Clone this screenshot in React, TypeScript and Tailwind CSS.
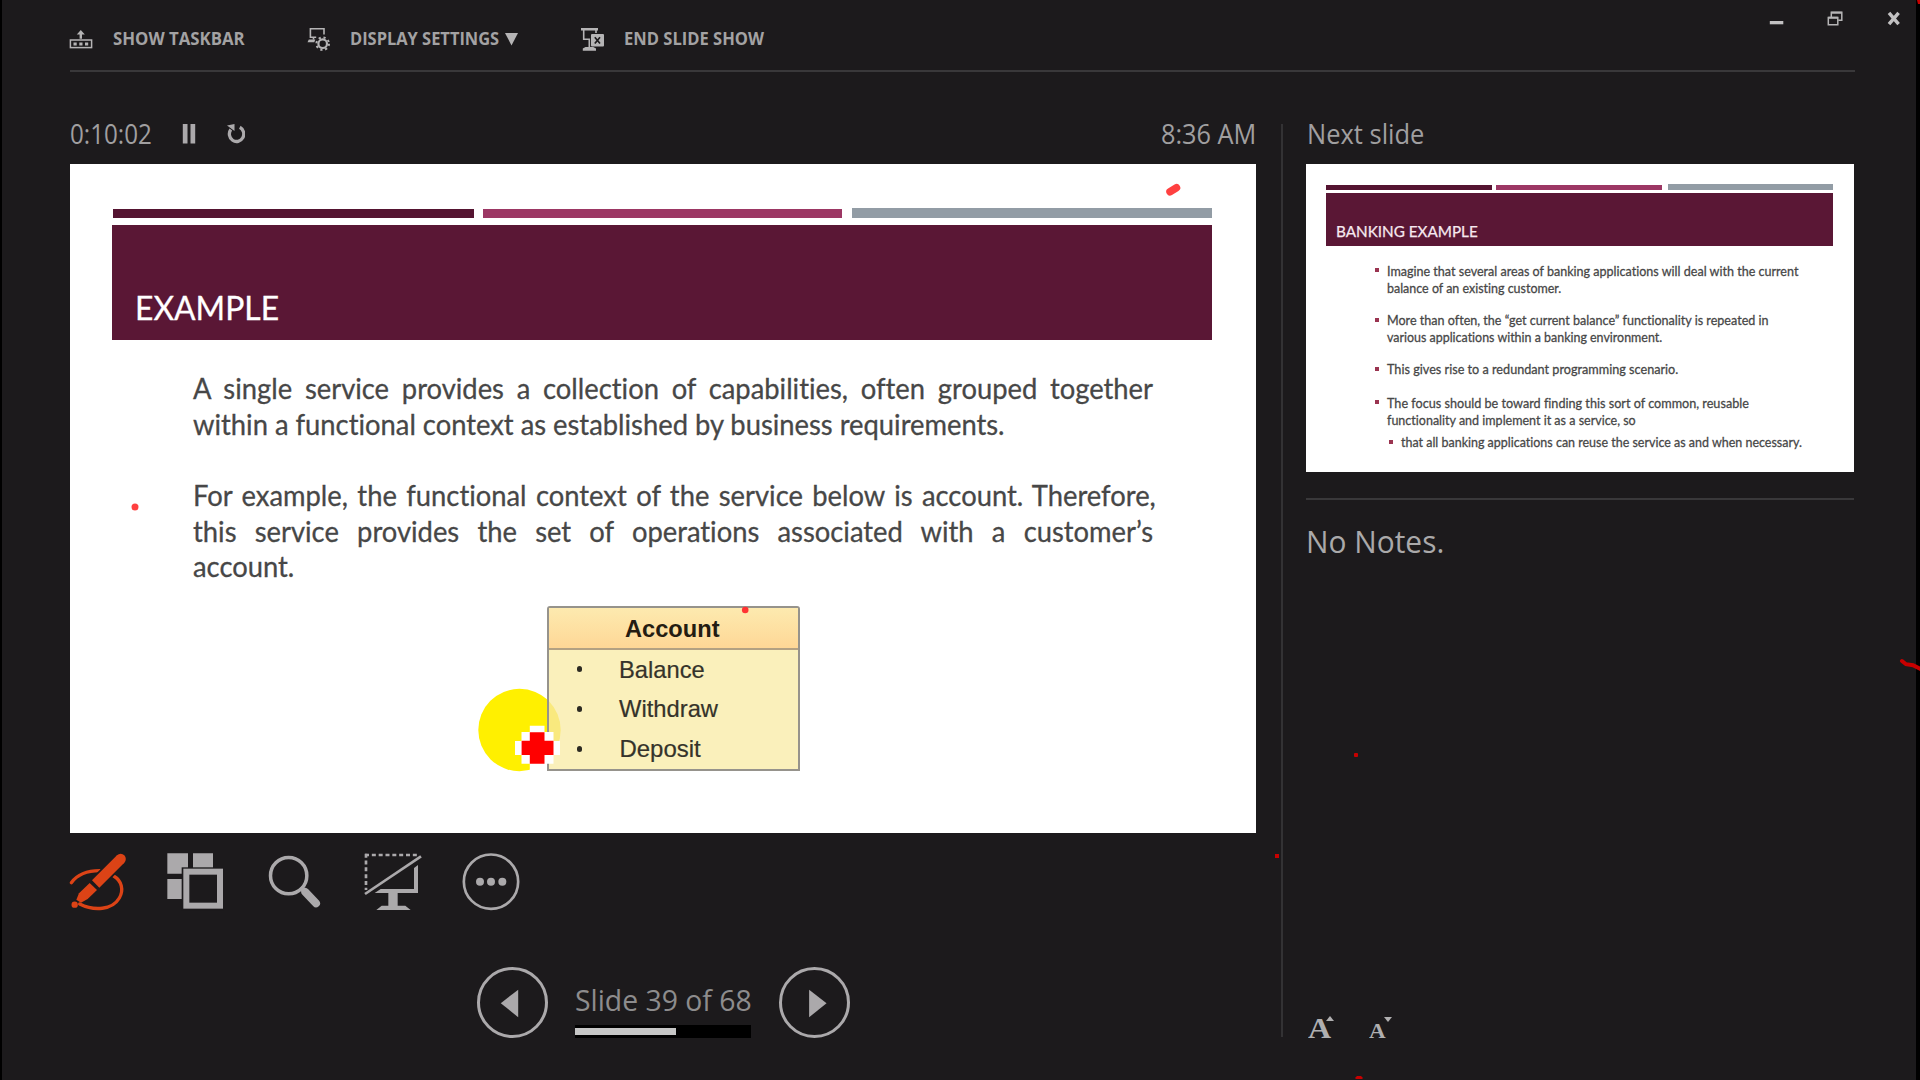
import { useLayoutEffect, useRef, type ReactNode } from "react";

const UI = "font-['Open_Sans','Noto_Sans',sans-serif]";
const SLIDE = "font-['Lato','Open_Sans',sans-serif] [font-variant-ligatures:none]";

/** One line of text, condensed or widened to fill the width given by its class. */
function Fit({ className, children }: { className: string; children: ReactNode }) {
  const outer = useRef<HTMLDivElement>(null);
  const inner = useRef<HTMLSpanElement>(null);
  useLayoutEffect(() => {
    const fit = () => {
      if (!outer.current || !inner.current) return;
      const scale = outer.current.getBoundingClientRect().width / inner.current.offsetWidth;
      inner.current.style.transform = `scaleX(${scale})`;
    };
    fit();
    document.fonts?.ready.then(fit);
  }, []);
  return (
    <div ref={outer} className={`shrink-0 ${className}`}>
      <span ref={inner} className="inline-block origin-left whitespace-nowrap">
        {children}
      </span>
    </div>
  );
}

function TaskbarIcon() {
  return (
    <svg viewBox="69 26 24 24" className="h-6 w-6 shrink-0" fill="#b5b4b5">
      <path d="M80.8 30l4 4.6h-2.8v4.2h-2.4v-4.2h-2.8z" />
      <rect x="70.4" y="40" width="21.2" height="7.6" fill="none" stroke="#b5b4b5" strokeWidth="1.5" />
      <path d="M73.5 42.4h3.2v3h-3.2zM79.3 42.4h3.2v3h-3.2zM85 42.4h3.2v3H85z" />
    </svg>
  );
}

function DisplayIcon() {
  return (
    <svg viewBox="307 26 24 24" className="h-6 w-6 shrink-0 overflow-visible" fill="none" stroke="#b5b4b5">
      <path d="M324 34.5v-5.700h-13.600v8.400h5.800M313.500 37v2.500" strokeWidth="1.600" />
      <path d="M308.800 39.500h6.500l-1 2.700h-6.800z" fill="#b5b4b5" stroke="none" />
      <circle cx="322.700" cy="43.700" r="4.300" strokeWidth="2.200" />
      <circle cx="322.700" cy="43.700" r="6.300" strokeWidth="2" strokeDasharray="2.200 2.750" />
    </svg>
  );
}

function EndShowIcon() {
  return (
    <svg viewBox="581 26 24 24" className="h-6 w-6 shrink-0 overflow-visible" fill="#b5b4b5">
      <path d="M581 28h17v2.600h-17zM582.800 48.500l2.700-1.500h7.800l2.700 1.500v2.200h-13.200z" />
      <path d="M583.700 30v9.200h5.600v8M596 30v3" fill="none" stroke="#b5b4b5" strokeWidth="1.600" />
      <rect x="591" y="34" width="13" height="12.600" rx="1" />
      <path d="M594.800 37.200l5.200 6.300M600 37.200l-5.200 6.300" stroke="#1c1a1c" strokeWidth="1.700" />
    </svg>
  );
}

function Header() {
  return (
    <header className={`ml-[67px] flex h-[70px] w-[1832px] items-center pt-[6px] text-[18px] leading-6 font-bold text-[#a3a2a3] ${UI}`}>
      <TaskbarIcon />
      <Fit className="ml-[19.500px] w-[131.500px]">SHOW TASKBAR</Fit>
      <span className="w-[63px]" />
      <DisplayIcon />
      <Fit className="ml-[19.200px] w-[148.800px]">DISPLAY SETTINGS</Fit>
      <svg viewBox="505 26 13 24" className="ml-[6px] h-6 w-[13px]" fill="#b5b4b5">
        <path d="M505 33h13l-6.500 12.500z" />
      </svg>
      <span className="w-[63px]" />
      <EndShowIcon />
      <Fit className="ml-[18.800px] w-[139.800px]">END SLIDE SHOW</Fit>
      <div className="mt-[3px] ml-auto flex self-start">
        <svg viewBox="1769 9 15 18" className="h-[18px] w-[15px]" fill="#c2c1c2">
          <path d="M1769.800 21h13.500v3.300h-13.500z" />
        </svg>
        <svg viewBox="1827 9 16 18" className="ml-[43px] h-[18px] w-[16px]" fill="none" stroke="#b5b4b5" strokeWidth="1.500">
          <path d="M1828.300 17.500h9.500v7.300h-9.500z" />
          <path d="M1831.300 17v-4.700h10.500v8h-3.500" />
          <path d="M1828.300 17.700h9.500M1831.300 12.700h10.500" strokeWidth="2" />
        </svg>
        <svg viewBox="1887 9 14 18" className="ml-[44px] h-[18px] w-[14px]" stroke="#c2c1c2" strokeWidth="3.400">
          <path d="M1889 12.800l9.600 11.400M1898.600 12.800l-9.600 11.400" />
        </svg>
      </div>
    </header>
  );
}

function AccountBox() {
  const items = [
    { label: "Balance", width: "w-[86px]" },
    { label: "Withdraw", width: "w-[99px]" },
    { label: "Deposit", width: "w-[81px]" },
  ];
  return (
    <div className="mt-[21.600px] ml-[477.300px] h-[165px] w-[252.500px] rounded-t-[3px] border-2 border-[#96938c] bg-[#faf0bb] font-['Liberation_Sans',Arial,sans-serif] text-[#35332a]">
      <div className="flex h-[42px] border-b-2 border-[#b3a182] bg-linear-to-b from-[#fdeaaf] to-[#fed796] pt-[3px] text-[23px] leading-[37px] font-bold text-[#241c12]">
        <Fit className="ml-[76px] w-[94.500px]">Account</Fit>
      </div>
      {items.map((item) => (
        <div key={item.label} className="flex h-[39.600px] items-center text-[24px] leading-[39.600px] [-webkit-text-stroke:0.2px]">
          <span className="ml-[27.300px] h-[6px] w-[5px] rounded-full bg-[#2c2a22]" />
          <Fit className={`ml-[37.800px] ${item.width}`}>{item.label}</Fit>
        </div>
      ))}
    </div>
  );
}

function CurrentSlide() {
  return (
    <section className={`mt-[8.300px] h-[668.300px] w-[1186px] bg-white pt-[43.700px] ${SLIDE}`}>
      <div className="ml-[43.300px] flex h-[10px] items-end">
        <div className="h-[9px] w-[360.500px] bg-[#551431]" />
        <div className="ml-[9px] h-[9px] w-[359.600px] bg-[#9c3764]" />
        <div className="ml-[9.400px] h-[10px] w-[360.400px] bg-[#929ca5]" />
      </div>
      <div className="mt-[7px] ml-[42px] flex h-[115.300px] w-[1100px] bg-[#5a1735] pt-[63.400px] text-[32.500px] leading-[40px] text-white [-webkit-text-stroke:0.3px]">
        <Fit className="ml-[22.700px] w-[144px]">EXAMPLE</Fit>
      </div>
      <div className="mt-[29.600px] ml-[122.600px] w-[1018px] origin-left scale-x-[0.943] text-[29px] leading-[35.700px] whitespace-nowrap text-[#474747] [-webkit-text-stroke:0.3px]">
        <div className="[text-align-last:justify]">
          A single service provides a collection of capabilities, often grouped together
        </div>
        <div>within a functional context as established by business requirements.</div>
        <div className="mt-[35.700px] w-[1021px] [text-align-last:justify]">
          For example, the functional context of the service below is account. Therefore,
        </div>
        <div className="[text-align-last:justify]">
          this service provides the set of operations associated with a customer’s
        </div>
        <div>account.</div>
      </div>
      <AccountBox />
    </section>
  );
}

function Toolbar() {
  return (
    <div className="mt-[19.700px] ml-[-0.600px] flex h-[60px]">
      <svg viewBox="28 36 174 180" className="h-[60px] w-[58px] overflow-visible" fill="#dc4316">
        <path d="M35 128Q62 92 120 92M162 108C186 122 193 150 179 174C158 210 104 214 60 192" fill="none" stroke="#dc4316" strokeWidth="10" strokeLinecap="round" />
        <path d="M183 57L108 132" stroke="#1c1a1c" strokeWidth="42" />
        <path d="M183 57L108 132" stroke="#dc4316" strokeWidth="31" />
        <circle cx="183" cy="57" r="15.500" />
        <path d="M90 129L112 150L84 177L64 188L50 179L58 160Z" />
        <circle cx="45" cy="194" r="9.500" />
      </svg>
      <svg viewBox="321 36 171 180" className="ml-[40px] h-[60px] w-[57px]" fill="#aba9ab">
        <path d="M322 40h62v61h-62zM399 40h60v50h-60zM322 117h50v60h-50z" />
        <rect x="375" y="92" width="109" height="110" fill="#1c1a1c" stroke="#1c1a1c" strokeWidth="20" />
        <rect x="379" y="95" width="101" height="102" fill="none" stroke="#aba9ab" strokeWidth="18" />
      </svg>
      <svg viewBox="624 36 159 180" className="ml-[44px] h-[60px] w-[53px]" fill="none" stroke="#aba9ab">
        <circle cx="686" cy="107" r="54.500" strokeWidth="10.500" />
        <path d="M722 142l14 14" strokeWidth="14" />
        <path d="M736 156l32 34" strokeWidth="24" strokeLinecap="round" />
      </svg>
      <svg viewBox="912 36 174 180" className="ml-[43px] h-[60px] w-[58px]" fill="#aba9ab">
        <path d="M915 45H1072" fill="none" stroke="#aba9ab" strokeWidth="8" strokeDasharray="12 8.500" />
        <path d="M918 41V150" fill="none" stroke="#aba9ab" strokeWidth="8" strokeDasharray="12 8.500" />
        <path d="M915 162L1083 49" stroke="#aba9ab" strokeWidth="8" />
        <path d="M944 159L962 147H1062V84L1074 75V159ZM985 159h28v38h-28zM949 210L965 197H1036L1052 210Z" />
      </svg>
      <svg viewBox="1206 36 174 180" className="ml-[40px] h-[60px] w-[58px]" fill="#aba9ab">
        <circle cx="1293" cy="125" r="81.500" fill="none" stroke="#aba9ab" strokeWidth="8" />
        <circle cx="1260" cy="125" r="12" />
        <circle cx="1293" cy="125" r="12" />
        <circle cx="1327" cy="125" r="12" />
      </svg>
    </div>
  );
}

function Navigation() {
  return (
    <div className="mt-[54.700px] ml-[407px] flex h-[71px]">
      <svg viewBox="51 52 212 212" className="h-[71px] w-[71px]" fill="#aba9ab">
        <circle cx="157" cy="158" r="101.500" fill="none" stroke="#aba9ab" strokeWidth="9" />
        <path d="M122 160L174 120V202Z" />
      </svg>
      <div className="ml-[27px] flex w-[176px] flex-col">
        <Fit className={`mt-[13px] w-[177px] text-[29px] leading-[40px] text-[#8d8c8d] ${UI}`}>Slide 39 of 68</Fit>
        <div className="mt-[5px] flex h-[13px] items-center bg-black">
          <div className="h-[7px] w-[100.500px] bg-[#c6c6c6]" />
        </div>
      </div>
      <svg viewBox="957 52 212 212" className="ml-[28px] h-[71px] w-[71px]" fill="#aba9ab">
        <circle cx="1063" cy="158" r="101.500" fill="none" stroke="#aba9ab" strokeWidth="9" />
        <path d="M1099 160L1047 120V202Z" />
      </svg>
    </div>
  );
}

function CurrentPane() {
  return (
    <main className="ml-[68px] w-[1186px] pt-[40px]">
      <div className={`flex h-[44px] items-center text-[27px] leading-[44px] text-[#a09fa0] ${UI}`}>
        <Fit className="w-[81.500px]">0:10:02</Fit>
        <svg viewBox="182 124 14 22" className="ml-[30.500px] h-[22px] w-[14px]" fill="#aba9ab">
          <path d="M182.800 125h4.700v19.500h-4.700zM190.500 125h4.700v19.500h-4.700z" />
        </svg>
        <svg viewBox="228 124 18 22" className="ml-[31px] h-[22px] w-[18px]" fill="none" stroke="#aba9ab">
          <path d="M240.800 128.300A7.200 7.500 0 1 1 231.800 130.500" strokeWidth="3.300" />
          <path d="M228 126.500l7.500-1.500v7z" fill="#aba9ab" stroke="none" />
        </svg>
        <Fit className="ml-auto w-[95.500px]">8:36 AM</Fit>
      </div>
      <CurrentSlide />
      <Toolbar />
      <Navigation />
    </main>
  );
}

const bullets = [
  {
    gap: "mt-0",
    lines: [
      { w: "w-[411.500px]", text: "Imagine that several areas of banking applications will deal with the current" },
      { w: "w-[174.500px]", text: "balance of an existing customer." },
    ],
  },
  {
    gap: "mt-[16px]",
    lines: [
      { w: "w-[381.500px]", text: "More than often, the “get current balance” functionality is repeated in" },
      { w: "w-[275.500px]", text: "various applications within a banking environment." },
    ],
  },
  { gap: "mt-[16px]", lines: [{ w: "w-[291px]", text: "This gives rise to a redundant programming scenario." }] },
  {
    gap: "mt-[17px]",
    lines: [
      { w: "w-[362px]", text: "The focus should be toward finding this sort of common, reusable" },
      { w: "w-[248.500px]", text: "functionality and implement it as a service, so" },
    ],
  },
];

function NextSlide() {
  return (
    <section className={`mt-[8.300px] h-[308px] w-[547.500px] bg-white pt-[19.700px] ${SLIDE}`}>
      <div className="ml-[20px] flex h-[6px] items-end">
        <div className="h-[5px] w-[165.600px] bg-[#551431]" />
        <div className="ml-[4.400px] h-[5px] w-[165.600px] bg-[#9c3764]" />
        <div className="ml-[6px] h-[6px] w-[165.700px] bg-[#929ca5]" />
      </div>
      <div className="mt-[3px] ml-[20px] flex h-[53px] w-[507.300px] bg-[#5a1735] pt-[27.600px] text-[16px] leading-[20px] text-[#f6e9f0] [-webkit-text-stroke:0.25px]">
        <Fit className="ml-[10px] w-[142px]">BANKING EXAMPLE</Fit>
      </div>
      <ul className="mt-[17px] ml-[68px] text-[14px] leading-[16.600px] text-[#474747] [-webkit-text-stroke:0.3px]">
        {bullets.map((bullet) => (
          <li key={bullet.lines[0].text} className={`flex ${bullet.gap}`}>
            <span className="mt-[5.400px] mr-[8.300px] ml-[0.500px] h-[4px] w-[4px] bg-[#9a3450]" />
            <div>
              {bullet.lines.map((line) => (
                <Fit key={line.text} className={`h-[16.600px] ${line.w}`}>
                  {line.text}
                </Fit>
              ))}
            </div>
          </li>
        ))}
        <li className="mt-[6px] ml-[14.700px] flex">
          <span className="mt-[5.400px] mr-[8.300px] ml-[0.500px] h-[4px] w-[4px] bg-[#9a3450]" />
          <Fit className="w-[401px]">that all banking applications can reuse the service as and when necessary.</Fit>
        </li>
      </ul>
    </section>
  );
}

function NotesPane() {
  return (
    <aside className="ml-[23px] flex w-[548px] flex-col pt-[40px]">
      <Fit className={`ml-[0.500px] w-[117px] text-[27px] leading-[44px] text-[#a09fa0] ${UI}`}>Next slide</Fit>
      <NextSlide />
      <div className="mt-[25.700px] h-[2px] shrink-0 bg-[#39383a]" />
      <Fit className={`mt-[21.500px] w-[138.500px] text-[31.500px] leading-[40px] text-[#aaa9aa] ${UI}`}>No Notes.</Fit>
      <div className="mt-auto mb-[32px] flex h-[40px] font-['Liberation_Serif',serif] leading-[40px] font-bold text-[#b0afb0]">
        <div className="relative ml-[2px]">
          <Fit className="w-[23.500px] text-[30px]">A</Fit>
          <svg viewBox="0 0 8 5" className="absolute top-[8px] left-[18px] h-[5px] w-[8px]" fill="#b0afb0">
            <path d="M4 0l4 5H0z" />
          </svg>
        </div>
        <div className="relative mt-[3px] ml-[37.500px]">
          <Fit className="w-[16.500px] text-[21px]">A</Fit>
          <svg viewBox="0 0 8 5" className="absolute top-[5.500px] left-[14.500px] h-[5px] w-[8px]" fill="#b0afb0">
            <path d="M0 0h8L4 5z" />
          </svg>
        </div>
      </div>
    </aside>
  );
}

/** Highlighted pointer plus the pen marks left on the screen. */
function InkLayer() {
  return (
    <svg viewBox="0 0 1920 1080" className="pointer-events-none absolute inset-0 h-full w-full" fill="none">
      <clipPath id="outside-box">
        <path d="M470 680H547V780H470Z" />
      </clipPath>
      <clipPath id="inside-box">
        <path d="M549 680H570V768.700H549Z" />
      </clipPath>
      <circle cx="519.500" cy="730" r="41.200" fill="#fff000" clipPath="url(#outside-box)" />
      <circle cx="519.500" cy="730" r="41.200" fill="#f9e97e" clipPath="url(#inside-box)" />
      <path d="M529.800 725.700h14.700v6.300h9v9h6.500v14h-6.500v8.700h-9v7.300h-14.700v-7.300h-8.300v-8.700h-6.500v-14h6.500v-9h8.300z" fill="#fff" />
      <path d="M529.800 732.300h14.700v8.400h9v14.300h-9v8.700h-14.700v-8.700h-8.200v-14.300h8.200z" fill="#f00" />
      <path d="M1170 191.800L1176.500 187.800" stroke="#ff4040" strokeWidth="7.500" strokeLinecap="round" />
      <circle cx="135" cy="507" r="3.500" fill="#ff4040" />
      <circle cx="745.200" cy="610" r="3.300" fill="#ff3333" />
      <g fill="#c80000">
        <rect x="1354" y="753" width="4" height="4" rx="1" />
        <rect x="1275" y="854" width="4" height="4" />
        <path d="M1355.500 1079v-1.500l1.500-1.500h4l1.500 1.500v1.500z" />
        <path d="M1917 0h3v4h-2z" />
      </g>
      <path d="M1902 661L1906 664.200L1913 665.200L1920 668.800" stroke="#c80000" strokeWidth="4" strokeLinecap="round" />
    </svg>
  );
}

export default function App() {
  return (
    <div className="relative flex h-[1080px] w-[1920px] overflow-hidden bg-[#1c1a1c]">
      <div className="w-[2px] shrink-0 bg-black" />
      <div className="flex min-w-0 flex-1 flex-col">
        <Header />
        <div className="ml-[67.500px] h-[2px] w-[1785px] shrink-0 bg-[#39383a]" />
        <div className="flex flex-1">
          <CurrentPane />
          <div className="mt-[52px] ml-[25px] h-[913px] w-[2px] bg-[#333234]" />
          <NotesPane />
        </div>
      </div>
      <div className="w-[4px] shrink-0 bg-black" />
      <InkLayer />
    </div>
  );
}
